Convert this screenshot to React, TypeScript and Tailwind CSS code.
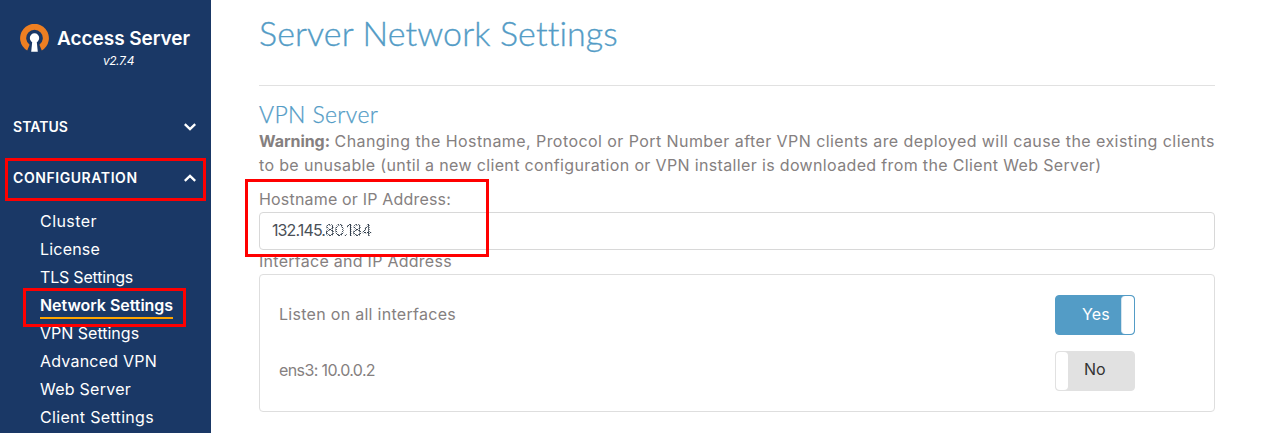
import type { ReactNode } from "react";

function Logo() {
  return (
    <svg className="h-[29px] w-[30px] shrink-0" viewBox="0 0 30 29">
      <path
        d="M7.2 26.6A14.4 14.4 0 1 1 21.8 26.6L19.4 20.8A8.3 8.3 0 1 0 9.6 20.8Z"
        fill="#ee7f22"
      />
      <circle cx="14.5" cy="14" r="4.7" fill="#fff" />
      <path d="M12.4 16h4.2l1.2 11.8H11.2Z" fill="#fff" />
    </svg>
  );
}

function Chevron({ up = false }: { up?: boolean }) {
  return (
    <svg className="h-2 w-3" viewBox="0 0 12 8" fill="none" stroke="#fff" strokeWidth="2.4">
      <path d={up ? "M.8 6.8 6 1.9l5.2 4.9" : "M.8 1.2 6 6.1l5.2-4.9"} />
    </svg>
  );
}

function SectionHeader({ children, up }: { children: ReactNode; up?: boolean }) {
  return (
    <div className="flex h-[51px] items-center justify-between pl-[13px] pr-[15px] text-sm font-semibold text-white">
      {children}
      <Chevron up={up} />
    </div>
  );
}

function Toggle({ on }: { on: boolean }) {
  return on ? (
    <div className="flex h-10 w-20 justify-end rounded-[4px] border border-[#539cc6] bg-[#539cc6] leading-9 text-white">
      <span className="mr-[11px] tracking-[0.2px]">Yes</span>
      <span className="w-[13px] rounded-[4px] border-l border-[#d5e4ee] bg-white" />
    </div>
  ) : (
    <div className="flex h-10 w-20 rounded-[4px] border border-[#e1e1e1] bg-[#e1e1e1] leading-[35px] text-[#333]">
      <span className="w-[12px] rounded-[4px] bg-white" />
      <span className="ml-[16px] tracking-[-0.1px]">No</span>
    </div>
  );
}

export default function App() {
  return (
    <div className="relative flex h-[433px] w-full overflow-hidden bg-white font-['Inter',sans-serif] text-base">
      <aside className="w-[211px] shrink-0 bg-[#1a3866] text-white">
        <div className="flex h-[101px] flex-col pl-5 pt-6">
          <div className="flex items-center">
            <Logo />
            <span className="ml-[7px] whitespace-nowrap text-[19px] font-semibold leading-[29px] tracking-[-0.04px]">Access Server</span>
          </div>
          <span className="ml-[83px] text-xs italic leading-4 tracking-[-0.47px]">v2.7.4</span>
        </div>
        <SectionHeader>
          <span className="tracking-[0.04px]">STATUS</span>
        </SectionHeader>
        <SectionHeader up>
          <span className="tracking-[0.57px]">CONFIGURATION</span>
        </SectionHeader>
        <nav className="flex flex-col items-start whitespace-nowrap pl-10 pt-1 leading-7">
          <span className="tracking-[0.44px]">Cluster</span>
          <span className="tracking-[0.2px]">License</span>
          <span className="tracking-[-0.2px]">TLS Settings</span>
          <span className="h-7 border-b-2 border-[#ffa500] font-semibold tracking-[-0.04px]">Network Settings</span>
          <span>VPN Settings</span>
          <span className="tracking-[0.22px]">Advanced VPN</span>
          <span className="tracking-[0.25px]">Web Server</span>
          <span className="tracking-[0.32px]">Client Settings</span>
        </nav>
      </aside>

      <main className="ml-12 w-[956px] whitespace-nowrap text-[#858080]">
        <h1 className="h-[85px] pt-[11px] font-['Lato',sans-serif] text-[34px] font-light leading-[44px] tracking-[0.11px] text-[#539cc6] [-webkit-text-stroke:0.35px_#539cc6]">
          Server Network Settings
        </h1>
        <hr className="border-t border-[#e1e1e1]" />
        <h2 className="mt-4 h-[27px] font-['Lato',sans-serif] text-[23px] font-light leading-6 tracking-[0.36px] text-[#539cc6] [-webkit-text-stroke:0.25px_#539cc6]">
          VPN Server
        </h2>
        <div className="flex justify-between leading-6">
          <b className="tracking-[-0.04px]">Warning:</b>
          <span className="tracking-[0.43px]">
            Changing the Hostname, Protocol or Port Number after VPN clients are deployed will cause the existing clients
          </span>
        </div>
        <p className="leading-6 tracking-[0.35px]">
          to be unusable (until a new client configuration or VPN installer is downloaded from the Client Web Server)
        </p>
        <div className="mt-[10px] h-[25px] leading-6 tracking-[0.18px]">Hostname or IP Address:</div>
        <div className="flex h-[38px] rounded-[4px] border border-[#d8d8d8] pl-3 leading-[35px] text-[#495057]">
          <span className="tracking-[-0.89px]">132.145.</span>
          <span className="bg-[conic-gradient(#333f4d_25%,transparent_0_50%,#333f4d_0_75%,transparent_0)] bg-[length:3px_2px] bg-clip-text tracking-[-0.5px] text-transparent">
            80.184
          </span>
        </div>
        <div className="h-6 leading-[23px] tracking-[0.27px]">Interface and IP Address</div>
        <section className="h-[138px] rounded-[4px] border border-[#dedede] pl-[19px] pr-[79px] pt-5">
          <div className="flex h-14 items-start justify-between leading-[38px]">
            <span className="tracking-[0.29px]">Listen on all interfaces</span>
            <Toggle on />
          </div>
          <div className="flex h-14 items-start justify-between leading-[38px]">
            <span className="tracking-[-0.61px]">ens3: 10.0.0.2</span>
            <Toggle on={false} />
          </div>
        </section>
      </main>

      <div className="absolute left-[5px] top-[158px] h-[43px] w-[201px] border-3 border-[#f00]" />
      <div className="absolute left-[23px] top-[288px] h-[39px] w-[163px] border-3 border-[#f00]" />
      <div className="absolute left-[245px] top-[179px] h-[78px] w-[244px] border-3 border-[#f00]" />
    </div>
  );
}
